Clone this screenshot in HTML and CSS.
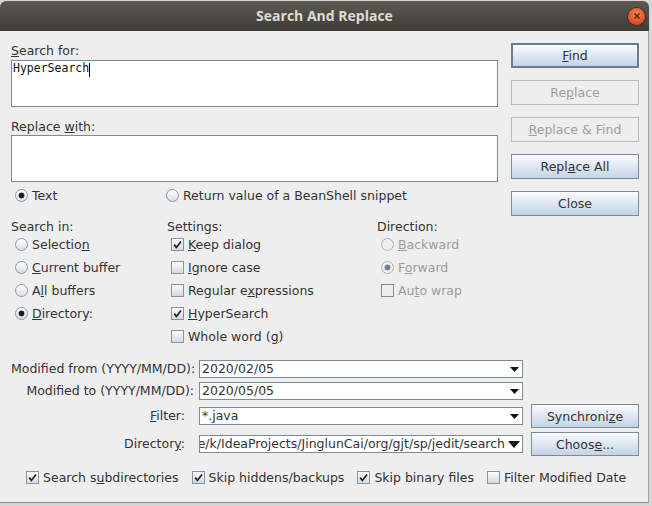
FILE: index.html
```html
<!DOCTYPE html>
<html>
<head>
<meta charset="utf-8">
<title>Search And Replace</title>
<link rel="stylesheet" href="styles.css">
</head>
<body>
<div class="window">
  <div class="titlebar">
    <span class="title">Search And Replace</span>
    <span class="close"><svg width="8" height="8" viewBox="0 0 8 8"><path d="M1.5 1.5L6.5 6.5M6.5 1.5L1.5 6.5" stroke="#5b2712" stroke-width="1.5" fill="none"/></svg></span>
  </div>
  <div class="content">
    <div class="top">
      <div class="main">
        <div class="label"><u>S</u>earch for:</div>
        <div class="textarea"><span class="mono">HyperSearch</span><span class="caret"></span></div>
        <div class="label label2">Replace <u>w</u>ith:</div>
        <div class="textarea"></div>
        <div class="mode-row">
          <div class="opt"><span class="radio on"></span><span>Text</span></div>
          <div class="opt"><span class="radio"></span><span>Return value of a BeanShell snippet</span></div>
        </div>
        <div class="cols">
          <div class="col">
            <div class="col-head">Search in:</div>
            <div class="opt row"><span class="radio"></span><span>Selectio<u>n</u></span></div>
            <div class="opt row"><span class="radio"></span><span><u>C</u>urrent buffer</span></div>
            <div class="opt row"><span class="radio"></span><span>A<u>l</u>l buffers</span></div>
            <div class="opt row"><span class="radio on"></span><span><u>D</u>irectory:</span></div>
          </div>
          <div class="col">
            <div class="col-head">Settings:</div>
            <div class="opt row"><span class="cb"><svg width="9" height="9" viewBox="0 0 9 9"><path d="M1.2 4.6L3.4 7.4L8 1.4" fill="none" stroke="#1e1e1e" stroke-width="1.7"/></svg></span><span><u>K</u>eep dialog</span></div>
            <div class="opt row"><span class="cb"></span><span><u>I</u>gnore case</span></div>
            <div class="opt row"><span class="cb"></span><span>Regular e<u>x</u>pressions</span></div>
            <div class="opt row"><span class="cb"><svg width="9" height="9" viewBox="0 0 9 9"><path d="M1.2 4.6L3.4 7.4L8 1.4" fill="none" stroke="#1e1e1e" stroke-width="1.7"/></svg></span><span><u>H</u>yperSearch</span></div>
            <div class="opt row"><span class="cb"></span><span>Whole word (<u>g</u>)</span></div>
          </div>
          <div class="col">
            <div class="col-head">Direction:</div>
            <div class="opt row dis"><span class="radio dis"></span><span><u>B</u>ackward</span></div>
            <div class="opt row dis"><span class="radio dis on"></span><span>F<u>o</u>rward</span></div>
            <div class="opt row dis"><span class="cb dis"></span><span>Au<u>t</u>o wrap</span></div>
          </div>
        </div>
      </div>
      <div class="btns">
        <div class="btn default"><span><u>F</u>ind</span></div>
        <div class="btn dis"><span>Re<u>p</u>lace</span></div>
        <div class="btn dis"><span><u>R</u>eplace &amp; Find</span></div>
        <div class="btn"><span>Repl<u>a</u>ce All</span></div>
        <div class="btn"><span>Close</span></div>
      </div>
    </div>

    <div class="form">
      <div class="flabel date">Modified from (YYYY/MM/DD):</div>
      <div class="combo"><div class="combo-text">2020/02/05</div><div class="arrow"><svg width="9" height="5" viewBox="0 0 9 5"><path d="M0 0H9L4.5 5Z" fill="#111"/></svg></div></div>
      <div></div>

      <div class="flabel date">Modified to (YYYY/MM/DD):</div>
      <div class="combo"><div class="combo-text">2020/05/05</div><div class="arrow"><svg width="9" height="5" viewBox="0 0 9 5"><path d="M0 0H9L4.5 5Z" fill="#111"/></svg></div></div>
      <div></div>

      <div class="flabel"><u>F</u>ilter:</div>
      <div class="combo"><div class="combo-text">*.java</div><div class="arrow"><svg width="9" height="5" viewBox="0 0 9 5"><path d="M0 0H9L4.5 5Z" fill="#111"/></svg></div></div>
      <div class="btn sbtn"><span>Synchroni<u>z</u>e</span></div>

      <div class="flabel">Director<u>y</u>:</div>
      <div class="combo"><div class="combo-text end"><span>e/k/IdeaProjects/JinglunCai/org/gjt/sp/jedit/search</span></div><div class="arrow wide"><svg width="12" height="7" viewBox="0 0 12 7"><path d="M0 0H12L6 7Z" fill="#111"/></svg></div></div>
      <div class="btn sbtn"><span>Choos<u>e</u>...</span></div>
    </div>

    <div class="checks">
      <div class="opt"><span class="cb"><svg width="9" height="9" viewBox="0 0 9 9"><path d="M1.2 4.6L3.4 7.4L8 1.4" fill="none" stroke="#1e1e1e" stroke-width="1.7"/></svg></span><span>Search s<u>u</u>bdirectories</span></div>
      <div class="opt"><span class="cb"><svg width="9" height="9" viewBox="0 0 9 9"><path d="M1.2 4.6L3.4 7.4L8 1.4" fill="none" stroke="#1e1e1e" stroke-width="1.7"/></svg></span><span>Skip hiddens/backups</span></div>
      <div class="opt"><span class="cb"><svg width="9" height="9" viewBox="0 0 9 9"><path d="M1.2 4.6L3.4 7.4L8 1.4" fill="none" stroke="#1e1e1e" stroke-width="1.7"/></svg></span><span>Skip binary files</span></div>
      <div class="opt"><span class="cb"></span><span>Filter Modified Date</span></div>
    </div>
  </div>
</div>
</body>
</html>
```

FILE: styles.css
```css
html, body {
  margin: 0;
  padding: 0;
}
body {
  width: 652px;
  height: 506px;
  overflow: hidden;
  background: #d6d6d6;
  font-family: "DejaVu Sans", "Liberation Sans", sans-serif;
  font-size: 12.5px;
  color: #333333;
}
u {
  text-decoration: underline;
  text-underline-offset: 1px;
}
.window {
  margin-top: 1px;
  width: 649px;
}
.titlebar {
  height: 30px;
  border-radius: 6px 6px 0 0;
  background: linear-gradient(#5c5a52, #3d3c37);
  display: grid;
  grid-template-columns: 1fr auto 1fr;
  align-items: center;
}
.title {
  grid-column: 2;
  font-family: "Open Sans", "DejaVu Sans", sans-serif;
  font-weight: 700;
  font-size: 14px;
  line-height: 18px;
  margin-top: -1px;
  color: #dfdbd2;
}
.close {
  grid-column: 3;
  justify-self: end;
  margin-right: 4px;
  width: 17px;
  height: 17px;
  border-radius: 50%;
  background: radial-gradient(circle at 50% 35%, #f5845a, #d9491d 75%);
  box-shadow: 0 0 0 1px #4a2b1c;
  display: flex;
  align-items: center;
  justify-content: center;
}
.content {
  background: #eeeeee;
  height: 472px;
  box-sizing: border-box;
  padding-top: 12px;
  border-right: 1px solid #a3a3a3;
  border-bottom: 1px solid #8a8a8a;
}
.top {
  display: flex;
  gap: 13px;
  padding-left: 11px;
}
.main {
  width: 487px;
}
.label {
  height: 16px;
  line-height: 16px;
  margin-bottom: 1px;
}
.label2 {
  margin-top: 12px;
  margin-bottom: 0;
}
.textarea {
  height: 47px;
  box-sizing: border-box;
  border: 1px solid #7a8a99;
  background: #ffffff;
  padding: 0 1px;
  display: flex;
  align-items: flex-start;
}
.mono {
  font-family: "DejaVu Sans Mono", "Liberation Mono", monospace;
  font-size: 11.5px;
  line-height: 15px;
  color: #111;
}
.caret {
  width: 1px;
  height: 14px;
  margin-top: 2px;
  background: #000;
}
.mode-row {
  display: grid;
  grid-template-columns: 155px auto;
  height: 18px;
  margin-top: 4px;
  align-items: center;
}
.mode-row .opt:first-child {
  padding-left: 4px;
}
.opt {
  display: flex;
  align-items: center;
  gap: 4px;
  white-space: nowrap;
}
.cols {
  display: grid;
  grid-template-columns: 156px 210px 121px;
  margin-top: 16px;
}
.col-head {
  height: 13px;
  line-height: 13px;
}
.row {
  height: 23px;
  padding-left: 4px;
}
.dis {
  color: #9c9c9c;
}
.radio {
  flex: none;
  width: 13px;
  height: 13px;
  box-sizing: border-box;
  border-radius: 50%;
  border: 1px solid #8c98a5;
  background: linear-gradient(#ffffff, #d6dee7);
}
.radio.on {
  background: radial-gradient(circle, #1c1c1c 0 2.6px, #cfd6de 3.2px, transparent 3.8px), linear-gradient(#ffffff, #d6dee7);
}
.radio.dis {
  border-color: #a9b2bb;
  background: transparent;
}
.radio.dis.on {
  background: radial-gradient(circle, #6f7f90 0 2.6px, #d6dbe0 3.2px, transparent 3.8px);
}
.cb {
  flex: none;
  width: 13px;
  height: 13px;
  box-sizing: border-box;
  border: 1px solid #8795a3;
  background: linear-gradient(#fdfdfe, #d2dae3);
  display: flex;
  align-items: center;
  justify-content: center;
}
.cb.dis {
  border-color: #7d8c9b;
  background: transparent;
}
.btns {
  width: 128px;
  display: flex;
  flex-direction: column;
  gap: 12px;
}
.btn {
  height: 25px;
  box-sizing: border-box;
  border: 1px solid #7a8a99;
  background: linear-gradient(#fbfcfe 0%, #e6edf5 35%, #c4d4e6 100%);
  display: flex;
  align-items: center;
  justify-content: center;
  color: #333333;
  white-space: nowrap;
}
.btn.default {
  border: 2px solid #6a7c91;
}
.btn.dis {
  border-color: #b9b9b9;
  background: #eeeeee;
  color: #9e9e9e;
}
.form {
  display: grid;
  grid-template-columns: 188px 332px 108px;
  row-gap: 4px;
  margin-top: 12px;
  padding-left: 11px;
  align-items: center;
}
.flabel {
  text-align: right;
  white-space: nowrap;
  line-height: 16px;
  padding-right: 14px;
}
.flabel.date {
  padding-right: 5px;
}
.combo {
  width: 324px;
  height: 18px;
  box-sizing: border-box;
  border: 1px solid #7a8a99;
  background: #ffffff;
  display: flex;
  align-items: center;
}
.combo-text {
  flex: 1;
  min-width: 0;
  overflow: hidden;
  white-space: nowrap;
  padding-left: 2px;
  line-height: 16px;
  display: flex;
}
.combo-text.end {
  justify-content: flex-end;
  padding-left: 0;
}
.combo-text.end span {
  flex: none;
}
.arrow {
  flex: none;
  width: 16px;
  display: flex;
  justify-content: center;
  align-items: center;
}
.arrow.wide {
  width: 17px;
}
.sbtn {
  height: 24px;
}
.checks {
  display: flex;
  align-items: center;
  gap: 13px;
  height: 18px;
  margin-top: 12px;
  padding-left: 26px;
}
```
